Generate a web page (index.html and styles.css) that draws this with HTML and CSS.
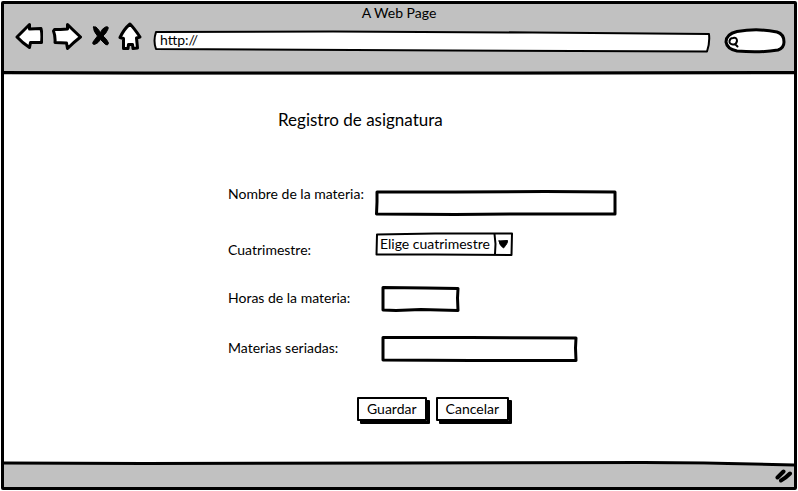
FILE: index.html
```
<!DOCTYPE html>
<html lang="es">
<head>
<meta charset="utf-8">
<title>A Web Page</title>
<link rel="stylesheet" href="styles.css">
</head>
<body>
<div class="window">
  <header class="chrome">
    <div class="window-title">A Web Page</div>
    <div class="toolbar">
      <button class="tool tool-back" type="button" aria-label="Back">
        <svg width="28" height="28" viewBox="0 0 28 28"><path d="M2 15 L14.500 2.500 L14.500 7 L26 6.500 Q27.500 13 26.500 20.500 L15.500 20.500 L14.500 25.500 Q7 20.500 2 15Z"/></svg>
      </button>
      <button class="tool tool-forward" type="button" aria-label="Forward">
        <svg width="30" height="28" viewBox="0 0 30 28"><path d="M2.500 7.500 Q8 7.500 15.500 7 L15.500 2.500 Q21 8 28.500 15 Q22 20 15.500 26.500 L14.500 21 L3 20.500 Q3.500 14 1.500 9Z"/></svg>
      </button>
      <button class="tool tool-stop" type="button" aria-label="Stop">
        <svg width="18" height="28" viewBox="0 0 18 28"><path d="M1.500 5 Q4 4 5.500 6.500 L8.500 10.500 Q10 6.500 13.500 5 Q17 4 16 7 Q14.500 11 11 14 Q15 17 16.500 21 Q16 24 13.500 22.500 L8.500 17.500 Q6.500 21 2.500 22.500 Q0 22.500 1 20 L5.500 14 Q1 9 1.500 5Z"/></svg>
      </button>
      <button class="tool tool-home" type="button" aria-label="Home">
        <svg width="24" height="28" viewBox="0 0 24 28"><path d="M12 2 Q16 6 22 15 L18.500 16 L19.500 26 L15 26.500 L14.500 22.500 L10.500 22.500 L10 26.500 L5.500 26.500 L5.500 16.500 L2 15.500 Q6 7 12 2Z"/></svg>
      </button>
      <div class="sketch address">
        <svg class="outline" viewBox="0 0 558 23" preserveAspectRatio="none" aria-hidden="true"><path d="M3 2 L180 1.500 L380 2.500 L556 4 Q557 13 554 21.500 L300 20.500 L3 19 Q0 11 3 2Z"/></svg>
        <input class="field" type="text" value="http://" aria-label="Address">
      </div>
      <div class="sketch search">
        <svg class="outline" viewBox="0 0 62 26" preserveAspectRatio="none" aria-hidden="true"><path d="M13 3.500 Q34 0 53 4 Q60 6 60 14 Q60 20 54 22 Q36 25 13 23 Q3 21 2 14 Q2 6 13 3.500Z"/></svg>
        <svg class="magnifier" width="12" height="14" viewBox="0 0 12 14" aria-hidden="true"><path d="M5 2 Q9 1 9 5 Q8 9 5 8.500 Q1 8 1.500 5 Q2 2 5 2Z M7 8 L9.500 10.500"/></svg>
        <input class="field" type="text" aria-label="Search">
      </div>
    </div>
    <svg class="rule" viewBox="0 0 790 4" preserveAspectRatio="none" aria-hidden="true"><path d="M0 1.500 L140 2 L520 2 L790 1.500"/></svg>
  </header>

  <main class="page">
    <h1 class="heading">Registro de asignatura</h1>
    <form class="form">
      <div class="row row-name">
        <label for="nombre">Nombre de la materia:</label>
        <div class="sketch box box-long">
          <svg class="outline" viewBox="0 0 242 26" preserveAspectRatio="none" aria-hidden="true"><path d="M2 2 L80 2 L170 1.500 L240 2 L240 24 L150 24 L80 24.500 L1.500 24 L2 12Z"/></svg>
          <input class="field" id="nombre" type="text">
        </div>
      </div>
      <div class="row row-term">
        <label for="cuatrimestre">Cuatrimestre:</label>
        <div class="sketch term">
          <svg class="outline" viewBox="0 0 138 24" preserveAspectRatio="none" aria-hidden="true"><path d="M2 2.500 L60 1.500 L137 1.500 L136.500 23 L60 22.500 L1.500 22.500Z"/></svg>
          <select class="field" id="cuatrimestre"><option>Elige cuatrimestre</option></select>
          <svg class="arrow" width="20" height="24" viewBox="0 0 20 24" aria-hidden="true"><path class="divider" d="M1.500 2 L2.500 12 L2 22"/><path class="head" d="M6 9 L14.500 8.500 Q15 11 10.500 16 Q6 13 6 9Z"/></svg>
        </div>
      </div>
      <div class="row row-inset">
        <label for="horas">Horas de la materia:</label>
        <div class="sketch box box-short">
          <svg class="outline" viewBox="0 0 79 26" preserveAspectRatio="none" aria-hidden="true"><path d="M2 1.500 L45 2 L77 2.500 L76.500 12 L77 24.500 L40 23.500 L15 24.500 L2 24Z"/></svg>
          <input class="field" id="horas" type="text">
        </div>
      </div>
      <div class="row row-inset">
        <label for="seriadas">Materias seriadas:</label>
        <div class="sketch box box-medium">
          <svg class="outline" viewBox="0 0 197 26" preserveAspectRatio="none" aria-hidden="true"><path d="M2 1.500 L90 1.500 L195 2 L194.500 12 L195 24.500 L90 24.500 L2 24Z"/></svg>
          <input class="field" id="seriadas" type="text">
        </div>
      </div>
      <div class="actions">
        <button class="action" type="button">Guardar</button>
        <button class="action" type="button">Cancelar</button>
      </div>
    </form>
  </main>

  <footer class="status">
    <svg class="status-bar" viewBox="0 0 790 26" preserveAspectRatio="none" aria-hidden="true"><path class="fill" d="M0 2 H600 L790 5 V26 H0Z"/><path class="line" d="M0 2 L140 2.500 L400 2 L640 1.500 L700 2 L790 4"/></svg>
    <svg class="grip" width="18" height="15" viewBox="0 0 18 15" aria-hidden="true"><path d="M2.500 8.500 Q5 6 8.500 2.500 M6 11.500 Q10 9.500 15 4.500"/></svg>
  </footer>
</div>
</body>
</html>
```
FILE: styles.css
```
* {
  box-sizing: border-box;
}

body {
  margin: 0;
  background: #fff;
  color: #000;
  font: 14px/18px Lato, "Open Sans", sans-serif;
}

input,
select,
button {
  margin: 0;
  padding: 0;
  border: 0;
  border-radius: 0;
  background: transparent;
  color: inherit;
  font: inherit;
}

svg {
  display: block;
  fill: #fff;
  stroke: #000;
  stroke-width: 3px;
  stroke-linejoin: round;
  stroke-linecap: round;
}

.window {
  display: flex;
  flex-direction: column;
  min-height: calc(100vh - 2px);
  margin: 1px;
  border: 3px solid #000;
  border-radius: 2px;
}

/* Browser chrome */
.chrome {
  background: #c1c1c1;
}

.window-title {
  text-align: center;
}

.toolbar {
  display: flex;
  align-items: center;
  height: 28px;
  padding: 0 8px 0 11px;
}

.tool-forward {
  margin-left: 9px;
}

.tool-stop {
  margin-left: 10px;
}

.tool-stop svg {
  fill: #000;
  stroke-width: 1px;
}

.tool-home {
  margin-left: 8px;
}

.sketch {
  position: relative;
}

.outline {
  position: absolute;
  inset: 0;
  width: 100%;
  height: 100%;
}

.field {
  position: relative;
  display: block;
  width: 100%;
  height: 100%;
  outline: 0;
}

.address {
  flex: 1;
  height: 23px;
  margin: 10px 13px 0 11px;
}

.address .outline {
  stroke-width: 2px;
}

.address .field {
  padding: 0 7px 3px;
}

.search {
  width: 62px;
  height: 26px;
  margin-top: 10px;
}

.search .outline {
  stroke-width: 3px;
}

.search .field {
  padding: 0 8px 0 18px;
}

.magnifier {
  position: absolute;
  left: 4px;
  top: 8px;
  stroke-width: 2px;
}

.rule {
  width: 100%;
  height: 4px;
  margin-top: 21px;
}

/* Page */
.page {
  flex: 1;
  padding: 33px 20px 20px 224px;
}

.heading {
  margin: 0 0 50px 50px;
  font-size: 17px;
  font-weight: 400;
  line-height: 24px;
}

.row {
  display: grid;
  grid-template-columns: 147px 1fr;
  align-items: start;
  margin-bottom: 24px;
  line-height: 24px;
}

.row-name {
  height: 34px;
  margin-bottom: 16px;
}

.row-name .box {
  align-self: end;
}

.row-term {
  height: 30px;
}

.row-term label {
  align-self: end;
}

.row-inset {
  grid-template-columns: 153px 1fr;
}

.box {
  height: 26px;
}

.box .field {
  padding: 0 6px;
}

.box-long {
  width: 242px;
}

.box-medium {
  width: 197px;
}

.box-short {
  width: 79px;
}

.term {
  width: 138px;
  height: 24px;
}

.term .outline,
.arrow {
  stroke-width: 2px;
}

.term .field {
  padding: 0 20px 2px 5px;
  appearance: none;
}

.arrow {
  position: absolute;
  right: 0;
  top: 0;
  fill: #000;
  pointer-events: none;
}

.arrow .divider {
  fill: none;
}

.arrow .head {
  stroke-width: 1px;
}

.actions {
  display: flex;
  gap: 9px;
  margin: 35px 0 0 129px;
}

.action {
  padding: 1px 8px;
  border: 2px solid #000;
  border-radius: 1px;
  box-shadow: 3px 3px 0 #000;
}

/* Status bar */
.status {
  position: relative;
}

.status-bar {
  width: 100%;
  height: 26px;
}

.status-bar .fill {
  fill: #c1c1c1;
  stroke: none;
}

.status-bar .line {
  fill: none;
}

.grip {
  position: absolute;
  right: 1px;
  bottom: 3px;
  fill: none;
  stroke-width: 4px;
}
```
